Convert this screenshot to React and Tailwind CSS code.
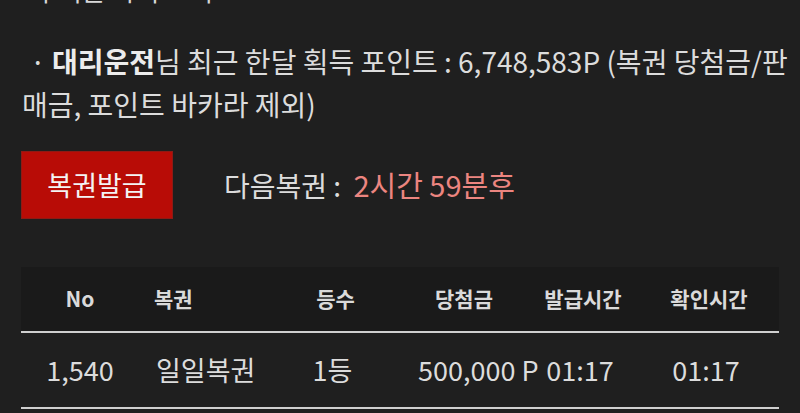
export default function App() {
  const font = { fontFamily: '"Noto Sans CJK KR", "Noto Sans", sans-serif' };

  return (
    <div
      className="w-[800px] h-[413px] overflow-hidden bg-[#1f1f1f] text-[#dcdcdc]"
      style={font}
    >
      {/* cut-off heading at the very top */}
      <div className="mt-[-26px] pl-[34px] text-[26px] leading-[32px] text-[#d8d8d8] whitespace-nowrap">
        우리은 마이크 리스
      </div>

      {/* points line */}
      <p className="mt-[34px] pl-[22px] pr-[10px] text-[28px] leading-[43px] text-[#dcdcdc]">
        <span className="pl-[8px]">·</span>{" "}
        <b className="font-bold text-[#ececec]">대리운전</b>님 최근 한달 획득 포인트 : 6,748,583P (복권 당첨금/판매금, 포인트 바카라 제외)
      </p>

      {/* issue button + next ticket */}
      <div className="mt-[25px] flex items-center pl-[21px]">
        <button className="w-[152px] h-[68px] bg-[#b80c06] border border-[#8f1a14] text-[27px] text-[#f4f4f4]">
          복권발급
        </button>
        <div className="ml-[51px] text-[28px] text-[#dcdcdc]">
          다음복권 :{" "}
          <span className="ml-[6px] text-[29px] text-[#ec8580]">2시간 59분후</span>
        </div>
      </div>

      {/* table */}
      <div className="mt-[48px] ml-[21px] w-[758px]">
        <div className="flex h-[66px] items-center bg-[#1a1a1a] border-b-2 border-[#cfcfcf] text-[21px] font-bold text-[#dadada]">
          <div className="w-[118px] text-center">No</div>
          <div className="w-[141px] pl-[15px]">복권</div>
          <div className="w-[111px] text-center">등수</div>
          <div className="w-[146px] text-center">당첨금</div>
          <div className="w-[92px] text-center whitespace-nowrap">발급시간</div>
          <div className="w-[150px] text-center pl-[10px]">확인시간</div>
        </div>
        <div className="flex h-[76px] items-center border-b-2 border-[#cfcfcf] text-[27px] text-[#dcdcdc] whitespace-nowrap">
          <div className="w-[118px] text-center">1,540</div>
          <div className="w-[141px] pl-[17px]">일일복권</div>
          <div className="w-[111px] text-center pr-[6px]">1등</div>
          <div className="w-[146px] pl-[27px]">500,000 P</div>
          <div className="w-[92px] text-center pr-[6px]">01:17</div>
          <div className="w-[150px] text-center pl-[4px]">01:17</div>
        </div>
      </div>
    </div>
  );
}
